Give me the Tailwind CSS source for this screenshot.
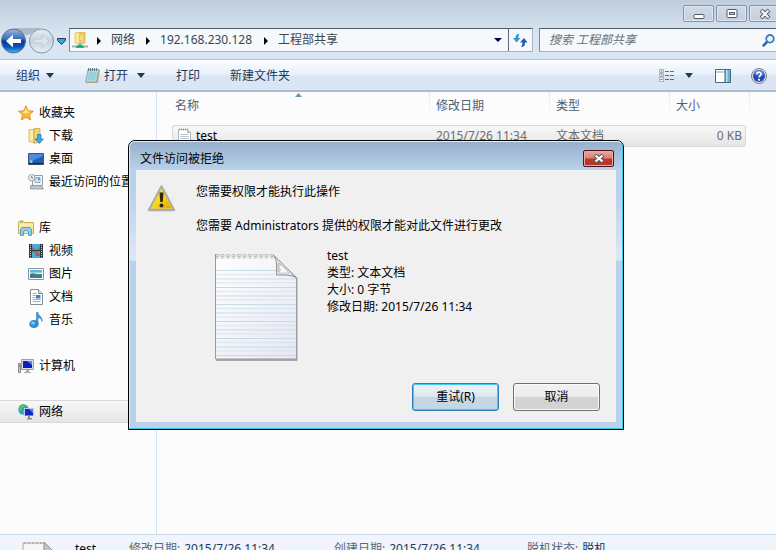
<!DOCTYPE html>
<html lang="zh-CN">
<head>
  <meta charset="UTF-8" />
  <meta name="viewport" content="width=device-width, initial-scale=1.0" />
  <title>工程部共享</title>
  <script src="https://cdn.jsdelivr.net/npm/@tailwindcss/browser@4"></script>
</head>
<body class="relative h-screen overflow-hidden flex flex-col bg-[#fcfcfc] font-['Noto_Sans','Noto_Sans_CJK_SC',sans-serif] text-xs leading-4 text-black whitespace-nowrap">

  <!-- Window frame: caption buttons and address bar -->
  <header class="shrink-0 h-[59px] bg-linear-to-b from-[#bfcddc] to-[#d8e5f2] to-60% overflow-hidden">
    <div class="h-7 pt-[5px] -mr-1 flex justify-end gap-0.5 items-start">
      <button aria-label="最小化" class="w-[31px] h-[17px] rounded-[2px] border border-[#8592ab] bg-linear-to-b from-[#cfdae7] to-[#c3d0df] shadow-[inset_0_0_0_1px_#dfe8f1] flex items-center justify-center">
        <svg width="12" height="12" viewBox="0 0 12 12"><rect x="1" y="6.500" width="10" height="4" rx="1" fill="#fff" stroke="#555b66"/></svg>
      </button>
      <button aria-label="还原" class="w-[31px] h-[17px] rounded-[2px] border border-[#8592ab] bg-linear-to-b from-[#cfdae7] to-[#c3d0df] shadow-[inset_0_0_0_1px_#dfe8f1] flex items-center justify-center">
        <svg width="12" height="9" viewBox="0 0 12 9"><rect x="1" y=".5" width="10" height="8" rx="1" fill="#fff" stroke="#555b66"/><rect x="3.500" y="3.500" width="5" height="2" fill="#c9d5e3" stroke="#555b66"/></svg>
      </button>
      <button aria-label="关闭" class="w-[31px] h-[17px] rounded-[2px] border border-[#8592ab] bg-linear-to-b from-[#cfdae7] to-[#c3d0df] shadow-[inset_0_0_0_1px_#dfe8f1] flex items-center justify-center">
        <svg width="12" height="10" viewBox="0 0 12 10"><path d="M2 1l8 8M10 1L2 9" stroke="#555b66" stroke-width="4"/><path d="M2.500 1.500l7 7M9.500 1.500l-7 7" stroke="#fff" stroke-width="2"/></svg>
      </button>
    </div>

    <div class="flex items-center">
      <!-- Back / forward -->
      <div class="w-[69px] h-6 shrink-0 flex items-center">
        <svg class="w-[69px] h-[28px] shrink-0" viewBox="0 0 69 28">
          <defs>
            <linearGradient id="back" x1="0" y1="0" x2="0" y2="1"><stop offset="0" stop-color="#9bb9de"/><stop offset=".45" stop-color="#2e63b4"/><stop offset=".5" stop-color="#08388f"/><stop offset=".75" stop-color="#0a55b8"/><stop offset="1" stop-color="#35c3f3"/></linearGradient>
            <linearGradient id="fwd" x1="0" y1="0" x2="0" y2="1"><stop offset="0" stop-color="#e5ecf3"/><stop offset=".5" stop-color="#c9d4e0"/><stop offset="1" stop-color="#e6eef6"/></linearGradient>
          </defs>
          <path d="M12 2h30c-8 1-10 7-15 7S20 3 12 2z" fill="#adb9c7"/>
          <circle cx="13.500" cy="15" r="12" fill="url(#back)" stroke="#5d7089"/>
          <path d="M6 15l7-6.500v4.500h8v4h-8v4.500z" fill="#fff"/>
          <circle cx="41.500" cy="15" r="12" fill="url(#fwd)" stroke="#8594a6"/>
          <path d="M49 15l-7-6.500v4.500h-8v4h8v4.500z" fill="#dbe3ec" stroke="#b8c4d1" stroke-width=".8"/>
          <path d="M57.500 12.500h8v2l-4 4-4-4z" fill="#3fa2d8" stroke="#223a5c"/>
        </svg>
      </div>

      <!-- Breadcrumb -->
      <nav class="flex-1 h-6 border border-[#a9b3bf] border-t-[#4d5a66] border-l-[#7c8894] bg-[#f5f9fc] flex items-center text-[#3c4650]">
        <svg class="ml-0.5 w-4 h-4 shrink-0" viewBox="0 0 16 16">
          <path d="M3 1l5-1v12l-5-1z" fill="#fbe794" stroke="#dcb74e" stroke-width=".7"/><path d="M8 0h5v11l-5 1z" fill="#efcf69" stroke="#cba546" stroke-width=".7"/><path d="M9 3v5" stroke="#fff6cf"/>
          <path d="M0 14.500h16" stroke="#a7b0b5" stroke-width="2"/><path d="M5 13h2v-1h2v1h2l1 3H4z" fill="#20b573"/>
        </svg>
        <svg class="ml-[9px] w-1 h-2 mt-px" viewBox="0 0 4 8"><path d="M0 0l4 4-4 4z" fill="#000"/></svg>
        <a href="#" class="ml-[10px]">网络</a>
        <svg class="ml-[11px] w-1 h-2 mt-px" viewBox="0 0 4 8"><path d="M0 0l4 4-4 4z" fill="#000"/></svg>
        <a href="#" class="ml-[10px]">192.168.230.128</a>
        <svg class="ml-3 w-1 h-2 mt-px" viewBox="0 0 4 8"><path d="M0 0l4 4-4 4z" fill="#000"/></svg>
        <a href="#" class="ml-[10px]">工程部共享</a>
        <button aria-label="以前的位置" class="ml-auto mr-1.5"><svg width="8" height="4" viewBox="0 0 8 4"><path d="M0 0h8L4 4z" fill="#000050"/></svg></button>
        <button aria-label="刷新" class="w-6 h-full border-l border-[#5f6b77] flex items-center justify-center">
          <svg width="15" height="15" viewBox="0 0 15 15">
            <path d="M6.500 1C3.500 1 2.500 2.500 2.500 5H0l3.500 4.500L7.500 5h-2c0-1.500 0-2.500 1-4z" fill="#2f97d8"/>
            <path d="M8 14c3 0 4-1.500 4-4.500h2.500L11 5 7 9.500h2.500c0 2-.3 3-1.500 4.500z" fill="#1f59b0"/>
          </svg>
        </button>
      </nav>

      <!-- Search -->
      <label class="ml-1.5 w-[237px] h-6 shrink-0 border border-r-0 border-[#a9b3bf] border-t-[#4d5a66] border-l-[#7c8894] bg-[#f5f9fc] flex items-center">
        <input type="text" aria-label="搜索" placeholder="搜索 工程部共享" class="flex-1 min-w-0 pl-[9px] italic outline-none placeholder:text-[#6a7076]" />
        <svg class="w-[13px] h-[13px] mr-px" viewBox="0 0 13 13"><path d="M5 8L1.500 11.500" stroke="#3a62b4" stroke-width="2.500" stroke-linecap="round"/><circle cx="8" cy="4.800" r="3.800" fill="#eaf4fc" stroke="#4179c4" stroke-width="1.800"/></svg>
      </label>
    </div>
  </header>

  <!-- Command bar -->
  <div class="shrink-0 h-[33px] pt-px border-t border-t-[#b3bfcd] border-b-2 border-b-[#a9bdd3] bg-linear-to-b from-[#fbfdff] from-0% via-[#e6f0fa] via-50% to-[#dbe6f4] to-52% flex items-center text-[#1e395b]">
    <button class="ml-4 flex items-center gap-1.5">组织<svg width="8" height="5" viewBox="0 0 8 5"><path d="M0 0h8L4 5z" fill="#1e395b"/></svg></button>
    <button class="ml-[31px] flex items-center">
      <svg width="15" height="16" viewBox="0 0 15 16">
        <path d="M3 2h12l-2 13H1z" fill="#c8ab77"/><path d="M3 1.500h11L11.500 14H.5z" fill="#a7dbe3" stroke="#6fa4ae" stroke-width=".7"/>
        <path d="M4 5h8M3.500 7h8M3 9h8M3 11h7" stroke="#74bccb" stroke-width=".6"/><path d="M3.500 0v3M5.500 0v3M7.500 0v3M9.500 0v3M11.500 0v3" stroke="#4c6670" stroke-width=".8"/>
      </svg>
      <span class="ml-1">打开</span>
      <svg class="ml-[9px]" width="8" height="5" viewBox="0 0 8 5"><path d="M0 0h8L4 5z" fill="#1e395b"/></svg>
    </button>
    <button class="ml-[31px]">打印</button>
    <button class="ml-[30px]">新建文件夹</button>
    <button aria-label="更改您的视图" class="ml-auto flex items-center gap-[10px]">
      <svg width="16" height="13" viewBox="0 0 16 13">
        <path d="M.5.500h4v3h-4zM.5 4.500h4v3h-4zM.5 8.500h4v4h-4z" fill="#fff" stroke="#93a2b3" stroke-width=".8"/>
        <path d="M1.500 1.500h2v1h-2z" fill="#44a047"/><path d="M1.500 5.500h2v1h-2z" fill="#d33"/><path d="M1.500 10h2v1h-2z" fill="#2d6dc6"/>
        <path d="M6 2.500h4M11 2.500h4M6 6.500h4M11 6.500h4M6 10.500h4M11 10.500h4" stroke="#5b6d81"/>
      </svg>
      <svg width="8" height="5" viewBox="0 0 8 5"><path d="M0 0h8L4 5z" fill="#1e395b"/></svg>
    </button>
    <button aria-label="预览窗格" class="ml-[22px]">
      <svg width="16" height="14" viewBox="0 0 16 14"><path d="M.5.500h15v13H.5z" fill="#fff" stroke="#4e6580"/><path d="M1 3h9" stroke="#8fa3b7"/><path d="M10 1h5v12h-5z" fill="#62b8da"/><path d="M11 1h1.500v12H11z" fill="#b8e4f2"/><path d="M10 1v12" stroke="#4e6580"/></svg>
    </button>
    <button aria-label="获取帮助" class="ml-5 mr-[9px]">
      <svg width="16" height="16" viewBox="0 0 16 16"><circle cx="8" cy="8" r="7.500" fill="#e3e6ec" stroke="#777d87"/><circle cx="8" cy="8" r="6" fill="#2149b0"/><path d="M3 7a5 5 0 0110 0c-3 1-7 1-10 0z" fill="#4f7bd3"/><path d="M5.800 6.300C5.800 3.400 10.200 3.500 10.200 6 10.200 7.600 8 7.700 8 9.600" fill="none" stroke="#fff" stroke-width="1.600"/><circle cx="8" cy="11.800" r="1.100" fill="#fff"/></svg>
    </button>
  </div>

  <div class="flex-1 min-h-0 flex">
    <!-- Navigation pane -->
    <aside class="w-[157px] shrink-0 border-r border-[#d3e3f3] pt-[9px] overflow-hidden flex flex-col gap-[23px]">
      <ul>
        <li><a href="#" class="h-[23px] pl-[18px] flex items-center gap-[5px]">
          <svg class="w-4 h-4 shrink-0" viewBox="0 0 16 16"><path d="M8 .8l2.200 4.900 5.300.5-4 3.500 1.200 5.300L8 12.300 3.300 15l1.200-5.300-4-3.500 5.300-.5z" fill="#fdb82f" stroke="#dc7f35" stroke-width=".8"/><path d="M8 3l1.500 3.500 3 .5-5 1.500-4-1.500 3-.5z" fill="#fee78f"/></svg>收藏夹</a></li>
        <li><a href="#" class="h-[23px] pl-7 flex items-center gap-[5px]">
          <svg class="w-4 h-4 shrink-0" viewBox="0 0 16 16"><path d="M1 1.500h5v13l-5-1z" fill="#fbe9a4" stroke="#d3af50" stroke-width=".8"/><path d="M6 .5h6v13l-6 2z" fill="#efd27a" stroke="#c9a54b" stroke-width=".8"/><path d="M9.500 6.500h3.500v4.500h2.500l-4.200 4.500L7 11h2.500z" fill="#3fa5ec" stroke="#1a6fc0" stroke-width=".7"/></svg>下载</a></li>
        <li><a href="#" class="h-[23px] pl-7 flex items-center gap-[5px]">
          <svg class="w-4 h-4 shrink-0" viewBox="0 0 16 16"><path d="M.5 2.500h15v11H.5z" fill="#2560b8" stroke="#42536b"/><path d="M1 3h14v2L1 11z" fill="#4c8ddd"/><path d="M1 12.500h14" stroke="#1a2f4f" stroke-width="1.500"/><path d="M2 9.500h2.500V12H2z" fill="#6fd3f5"/><path d="M3 9.500h1V11H3z" fill="#f3c638"/></svg>桌面</a></li>
        <li><a href="#" class="h-[23px] pl-7 flex items-center gap-[5px]">
          <svg class="w-4 h-4 shrink-0" viewBox="0 0 16 16"><path d="M4.500 1.500h10v10h-10z" fill="#f3f6f8" stroke="#949da6"/><path d="M7 3.500h5v5H7z" fill="#cfe1ee" stroke="#7e99b2" stroke-width=".7"/><path d="M10 4h1.500v2H10z" fill="#2b8ee0"/><path d="M2.500 11.500h11l2 3.500h-13z" fill="#c1c6cb" stroke="#8d949b" stroke-width=".8"/><circle cx="3.700" cy="3.700" r="3.200" fill="#eef1f4" stroke="#9aa2aa"/><path d="M3.700 2v2h1.500" fill="none" stroke="#596673" stroke-width=".8"/></svg>最近访问的位置</a></li>
      </ul>
      <ul>
        <li><a href="#" class="h-[23px] pl-[18px] flex items-center gap-[5px]">
          <svg class="w-4 h-4 shrink-0" viewBox="0 0 16 16"><path d="M.5 2.500l1-1.500h4l1 1.500h9v11H.5z" fill="#f8e398" stroke="#cfb057"/><path d="M1 5h14" stroke="#fff6cd"/><path d="M2 2h3" stroke="#45b854"/><path d="M2.500 15.500v-6L4 7.500h8l1.500 2v6h-3V12c0-2-5-2-5 0v3.500z" fill="#8bcdec" stroke="#4593bd" stroke-width=".8"/></svg>库</a></li>
        <li><a href="#" class="h-[23px] pl-7 flex items-center gap-[5px]">
          <svg class="w-4 h-4 shrink-0" viewBox="0 0 16 16"><path d="M1 1h14v14H1z" fill="#2b3a3e"/><path d="M4 1h8v14H4z" fill="#4aa8dc"/><path d="M4 4l4 3 4-3v4l-3 1 3 2v2H7l1-3-4-1z" fill="#a8644b"/><path d="M4 7.500h8" stroke="#27414f"/><path d="M2.500 2v13M13.500 2v13" stroke="#c9d2d4" stroke-width="1" stroke-dasharray="1 1"/></svg>视频</a></li>
        <li><a href="#" class="h-[23px] pl-7 flex items-center gap-[5px]">
          <svg class="w-4 h-4 shrink-0" viewBox="0 0 16 16"><path d="M.5 2.500h15v11H.5z" fill="#fff" stroke="#8c959d"/><path d="M2 4h12v8H2z" fill="#5fb4e6"/><path d="M2 6.500h12v2H2z" fill="#d4edf8"/><path d="M2 8c4-2 5 1 12 0v2H2z" fill="#3d8558"/><path d="M2 10h12v2H2z" fill="#367dad"/></svg>图片</a></li>
        <li><a href="#" class="h-[23px] pl-7 flex items-center gap-[5px]">
          <svg class="w-4 h-4 shrink-0" viewBox="0 0 16 16"><path d="M2.500.500h8l4 4v11h-12z" fill="#fff" stroke="#858c93"/><path d="M10.500.500v4h4" fill="#dfe4e8" stroke="#858c93"/><path d="M4.500 4.500h4M4.500 6.500h3M4.500 8.500h3M4.500 10.500h8M4.500 12.500h8" stroke="#8eb2d0"/><path d="M8 6h4.500v3.500H8z" fill="#2e86cc"/></svg>文档</a></li>
        <li><a href="#" class="h-[23px] pl-7 flex items-center gap-[5px]">
          <svg class="w-4 h-4 shrink-0" viewBox="0 0 16 16"><ellipse cx="6" cy="12" rx="4.200" ry="3.500" fill="#3393dc" stroke="#1a6cb4" stroke-width=".7"/><path d="M8.500 12V.500h1.500c0 3.500 5 4 4 9-.5-3-2-3.500-4-4V12z" fill="#3d9de2" stroke="#1a6cb4" stroke-width=".5"/><ellipse cx="5" cy="11" rx="1.800" ry="1.200" fill="#8fd0f5"/></svg>音乐</a></li>
      </ul>
      <ul>
        <li><a href="#" class="h-[23px] pl-[18px] flex items-center gap-[5px]">
          <svg class="w-4 h-4 shrink-0" viewBox="0 0 16 16"><path d="M3.500 1.500h12v10h-12z" fill="#dcdfe2" stroke="#9aa0a6"/><path d="M5 3h9v7H5z" fill="#0d1fbb"/><path d="M9 3h5v4z" fill="#5e82ee"/><path d="M8 12h3v2h2v1H6v-1h2z" fill="#a7acb1"/><path d="M.5 5.500h2v9h-2z" fill="#cdd1d4" stroke="#84898e"/><path d="M1 7h1v2H1z" fill="#3fc04a"/></svg>计算机</a></li>
      </ul>
      <ul>
        <li><a href="#" class="h-[23px] pl-[18px] flex items-center gap-[5px] border-y border-[#d9d9d9] bg-linear-to-b from-[#f8f8f8] to-[#e5e5e5]">
          <svg class="w-4 h-4 shrink-0" viewBox="0 0 16 16"><circle cx="5.500" cy="5.500" r="5.200" fill="#2b9ee0"/><path d="M2 1.500C4 0 6 0 7 1c0 2-3 2-3 4s-2 2-3.500 1C.3 4 1 2.500 2 1.500zM5 6l3 1-2 3.500C4 10 5 8 5 6z" fill="#4fca4c"/><path d="M6 4h10v8H6z" fill="#c4cbd4"/><path d="M7 5h8v6.500H7z" fill="#1026c0"/><path d="M11 5h4v4z" fill="#5f83ee"/><path d="M10 12h2v2h2v1.500H9V14h1z" fill="#858e98"/></svg>网络</a></li>
      </ul>
    </aside>

    <!-- File list -->
    <main class="flex-1 min-w-0 pl-[15px]">
      <table class="table-fixed w-[574px] border-separate border-spacing-0">
        <colgroup><col class="w-[258px]" /><col class="w-[120px]" /><col class="w-[120px]" /><col class="w-[76px]" /></colgroup>
        <thead>
          <tr class="h-[27px] text-left text-[#4c607a]">
            <th class="relative font-normal p-0 pl-[3px] after:absolute after:right-0 after:top-0 after:w-px after:h-6 after:bg-linear-to-b after:from-[#dce8f5] after:to-[#fcfcfc]">名称
              <svg class="absolute left-[123px] top-px" width="7" height="4" viewBox="0 0 7 4"><path d="M3.500 0L7 4H0z" fill="#6b95b5"/></svg></th>
            <th class="relative font-normal p-0 pl-1.5 after:absolute after:right-0 after:top-0 after:w-px after:h-6 after:bg-linear-to-b after:from-[#dce8f5] after:to-[#fcfcfc]">修改日期</th>
            <th class="relative font-normal p-0 pl-1.5 after:absolute after:right-0 after:top-0 after:w-px after:h-6 after:bg-linear-to-b after:from-[#dce8f5] after:to-[#fcfcfc]">类型</th>
            <th class="relative font-normal p-0 pl-1.5 after:absolute after:-right-1 after:top-0 after:w-px after:h-6 after:bg-linear-to-b after:from-[#dce8f5] after:to-[#fcfcfc]">大小</th>
          </tr>
          <tr class="h-1.5"><td colspan="4" class="p-0"></td></tr>
        </thead>
        <tbody>
          <tr class="h-[22px] text-[#6d6d6d] [&>td]:p-0 [&>td]:border-y [&>td]:border-[#d9d9d9] [&>td]:bg-linear-to-b [&>td]:from-[#f8f8f8] [&>td]:to-[#e5e5e5]">
            <td class="border-l rounded-l-[3px] text-black"><div class="flex items-center gap-1 ml-1">
              <svg class="w-[15px] h-4" viewBox="0 0 15 16"><path d="M1.500 1.500h9l3 3v11h-12z" fill="#fff" stroke="#b4b9bc"/><path d="M3 6.500h9M3 8.500h9M3 10.500h9M3 12.500h9" stroke="#b7cad6"/><path d="M2 1.500h9" stroke="#9a9fa2" stroke-width="2" stroke-dasharray="1 1"/><path d="M10.500 1.500v3h3" fill="#ddd" stroke="#a9aeb1"/></svg>
              test</div></td>
            <td><div class="pl-1.5">2015/7/26 11:34</div></td>
            <td><div class="pl-1.5">文本文档</div></td>
            <td class="border-r rounded-r-[3px] text-right"><div class="pr-[3px]">0 KB</div></td>
          </tr>
        </tbody>
      </table>
    </main>
  </div>

  <!-- Details pane -->
  <footer class="shrink-0 h-4 pt-1.5 overflow-hidden border-t border-[#c9d9e8] bg-[#f0f4fb] flex items-start text-[#5a6779]">
    <svg class="ml-[22px] w-8 h-10 shrink-0" viewBox="0 0 32 40"><path d="M1 2h21l8 8v29H1z" fill="#f6f6f6" stroke="#a8a8a8"/><path d="M22 1v9h9z" fill="#c4c4c4" stroke="#8f8f8f"/><path d="M2 2h20" stroke="#b2b2b2" stroke-width="2" stroke-dasharray="2 2"/></svg>
    <span class="ml-[21px] w-[54px] text-black">test</span>
    <span class="w-[205px] flex gap-1">修改日期: <span class="text-[#1e395b]">2015/7/26 11:34</span></span>
    <span class="w-[193px] flex gap-1">创建日期: <span class="text-[#1e395b]">2015/7/26 11:34</span></span>
    <span class="flex gap-1">脱机状态: <span class="text-[#1e395b]">脱机</span></span>
  </footer>

  <!-- Access denied dialog -->
  <section role="dialog" aria-labelledby="dialogTitle" class="absolute left-32 top-[140px] w-[496px] rounded-t-[7px] border border-black bg-[#b9d1ea] overflow-hidden">
    <div class="border border-l-[#dce9f6] border-t-[#e3edf7] border-r-[#35d0ee] border-b-[#35c8e4] rounded-t-md px-1.5 pb-1.5 bg-[linear-gradient(#97b1cd,#b9d1ea_28px,#b9d1ea_50px,#dde8f6_118px,#b9d1ea_119px)]">
      <div class="h-7 pl-1 pr-0.5 flex items-start justify-between">
        <h1 id="dialogTitle" class="pt-[9px]">文件访问被拒绝</h1>
        <button aria-label="关闭" class="mt-2 w-[31px] h-[17px] rounded-[2px] border border-[#47141c] bg-linear-to-b from-[#e9a99f] from-0% via-[#d98074] via-48% to-[#b9372a] to-52% shadow-[inset_0_0_0_1px_#eba99f] flex items-center justify-center">
          <svg width="12" height="9" viewBox="0 0 12 9"><path d="M2 1l8 7M10 1L2 8" stroke="#535666" stroke-width="4"/><path d="M2.500 1.500l7 6M9.500 1.500l-7 6" stroke="#fff" stroke-width="2.200"/></svg>
        </button>
      </div>
      <div class="bg-[#f0f0f0] pt-3.5 pb-[11px] pl-[11px] pr-4">
        <div class="flex items-start gap-5">
          <svg class="w-[29px] h-7 shrink-0" viewBox="0 0 29 28">
            <defs><linearGradient id="warn" x1="0" y1="0" x2="1" y2="1"><stop offset="0" stop-color="#fff36a"/><stop offset=".6" stop-color="#f8cf10"/><stop offset="1" stop-color="#e79a08"/></linearGradient></defs>
            <path d="M14.500 2.500L27 26H2z" fill="#d5d7d9" stroke="#a9acb0" stroke-width="2.500" stroke-linejoin="round"/>
            <path d="M14.500 4.500L25 24.500H4z" fill="url(#warn)" stroke="#e9c52c" stroke-width=".7" stroke-linejoin="round"/>
            <path d="M12.500 8.500h4l-.7 9.500h-2.600z" fill="#2a2a12"/><circle cx="14.500" cy="21.500" r="2" fill="#2a2a12"/>
          </svg>
          <div>
            <p>您需要权限才能执行此操作</p>
            <p class="mt-[18px]">您需要 Administrators 提供的权限才能对此文件进行更改</p>
          </div>
        </div>

        <div class="mt-[13px] pl-[67px] flex items-start gap-[29px]">
          <svg class="mt-1.5 w-[84px] h-[109px] shrink-0" viewBox="0 0 84 109">
            <defs>
              <linearGradient id="paper" x1="0" y1="0" x2="1" y2="1"><stop offset="0" stop-color="#fff"/><stop offset="1" stop-color="#e5e7f3"/></linearGradient>
              <pattern id="rings" width="5.500" height="5" patternUnits="userSpaceOnUse"><circle cx="3" cy="2.500" r="1.500" fill="#eee" stroke="#999" stroke-width=".8"/></pattern>
              <pattern id="rules" width="84" height="8.500" patternUnits="userSpaceOnUse"><path d="M0 .5h84" stroke="#c6dae5"/><path d="M0 4.500h84" stroke="#d3e2ea"/></pattern>
            </defs>
            <path d="M2 4h59l22.500 21v83H2z" fill="#a4a6a8"/>
            <path d="M1.500 3.500h58l23 22v80.500h-81z" fill="url(#paper)" stroke="#989a9c"/>
            <path d="M2 17h60v8h20v79H2z" fill="url(#rules)"/>
            <path d="M1 1h59v5H1z" fill="#efefef"/><path d="M2 1h58v5H2z" fill="url(#rings)"/><path d="M1.500 1v5" stroke="#8e9092"/>
            <path d="M59.500 2v.5c4 4 3 13 3 19.500 7 0 15-.5 20 3z" fill="#e2e2e2" stroke="#8f8f8f"/>
            <path d="M65 10v10h10z" fill="#f7f7f7" stroke="#bcbcbc" stroke-width=".7"/><circle cx="65" cy="12" r="1.300" fill="#fff" stroke="#999" stroke-width=".7"/><circle cx="65" cy="17" r="1.300" fill="#fff" stroke="#999" stroke-width=".7"/>
          </svg>
          <div class="leading-[17px]">
            <p>test</p>
            <p>类型: 文本文档</p>
            <p>大小: 0 字节</p>
            <p>修改日期: 2015/7/26 11:34</p>
          </div>
        </div>

        <div class="mt-[21px] flex justify-end gap-3.5">
          <button class="w-[87px] h-7 rounded-[3px] border border-[#2c7fb8] bg-linear-to-b from-[#eef4f8] from-0% via-[#dbe7ee] via-49% to-[#c3d8e4] to-52% shadow-[inset_0_0_0_1px_#3fcdf5]">重试(R)</button>
          <button class="w-[87px] h-7 rounded-[3px] border border-[#707070] bg-linear-to-b from-[#f2f2f2] from-0% via-[#ebebeb] via-49% to-[#d3d3d3] to-52% shadow-[inset_0_0_0_1px_#fafafa]">取消</button>
        </div>
      </div>
    </div>
  </section>

</body>
</html>
